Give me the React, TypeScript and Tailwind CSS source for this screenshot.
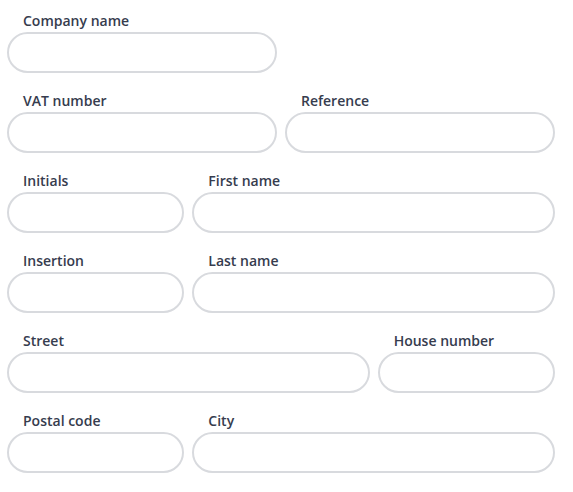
const Field = ({ label, span }: { label: string; span: string }) => (
  <label className={`flex flex-col ${span}`}>
    <span className="h-[22px] pl-4 text-[14px] font-semibold leading-[22px] text-[#363c4e]">{label}</span>
    <input className="h-[41px] w-full rounded-full border-2 border-[#d8dade] bg-white px-4 text-sm outline-none" />
  </label>
);

export default function App() {
  return (
    <div className="min-h-screen bg-white pl-[7px] pr-[18px] pt-[10px]" style={{ fontFamily: "'Open Sans', 'Noto Sans', sans-serif" }}>
      <div className="grid grid-cols-6 gap-x-2 gap-y-[17px]">
        <Field label="Company name" span="col-span-3" />
        <div className="col-span-3" />
        <Field label="VAT number" span="col-span-3" />
        <Field label="Reference" span="col-span-3" />
        <Field label="Initials" span="col-span-2" />
        <Field label="First name" span="col-span-4" />
        <Field label="Insertion" span="col-span-2" />
        <Field label="Last name" span="col-span-4" />
        <Field label="Street" span="col-span-4" />
        <Field label="House number" span="col-span-2" />
        <Field label="Postal code" span="col-span-2" />
        <Field label="City" span="col-span-4" />
      </div>
    </div>
  );
}
